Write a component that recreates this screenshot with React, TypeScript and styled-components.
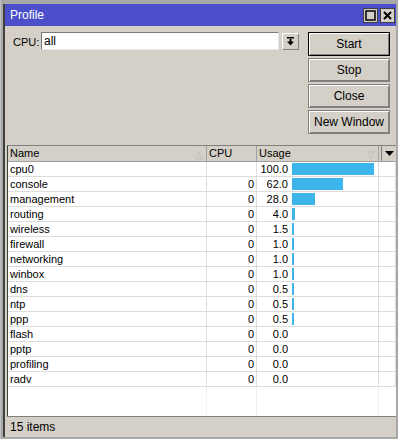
import React from "react";
import styled, { createGlobalStyle } from "styled-components";

const Global = createGlobalStyle`
  html, body { margin: 0; padding: 0; background: #9a9a9a; }
  body { font-family: "Liberation Sans", Arial, sans-serif; font-size: 11px; color: #000; }
  * { box-sizing: border-box; }
`;

const Frame = styled.div`
  width: 398px;
  height: 439px;
  background: #a8a8a8;
  padding: 4px 2px 2px 4px;
  display: flex;
  flex-direction: column;
  border-left: 1px solid #c0c0c0;
  position: relative;
  &::before {
    content: "";
    position: absolute;
    left: 2px;
    top: 4px;
    bottom: 2px;
    width: 2px;
    background: #404040;
  }
`;

const TitleBar = styled.div`
  height: 22px;
  background: #4b4fc9;
  display: flex;
  align-items: center;
  padding: 0 1px 0 5px;
  color: #fff;
  font-size: 12px;
`;

const Title = styled.div`
  flex: 1;
`;

const TitleBtn = styled.div`
  width: 15px;
  height: 15px;
  margin-left: 2px;
  background: #d4d0c8;
  border: 1px solid #404040;
  display: flex;
  align-items: center;
  justify-content: center;
`;

const Body = styled.div`
  flex: 1;
  background: #d4d0c8;
  display: flex;
  flex-direction: column;
`;

const Top = styled.div`
  height: 119px;
  display: flex;
  padding: 6px 6px 0 8px;
`;

const CpuRow = styled.div`
  display: flex;
  align-items: flex-start;
  flex: 1;
`;

const Label = styled.div`
  font-size: 11px;
  padding-top: 4px;
  width: 28px;
  white-space: nowrap;
`;

const Input = styled.div`
  width: 238px;
  height: 18px;
  background: #fff;
  border: 1px solid #7a7a7a;
  border-right-color: #e8e8e8;
  border-bottom-color: #e8e8e8;
  font-size: 12px;
  padding: 1px 2px;
`;

const DropBtn = styled.div`
  width: 17px;
  height: 17px;
  margin-left: 3px;
  margin-top: 1px;
  border: 1px solid #808080;
  border-top-color: #fff;
  border-left-color: #fff;
  background: #d4d0c8;
  display: flex;
  align-items: center;
  justify-content: center;
`;

const Buttons = styled.div`
  display: flex;
  flex-direction: column;
  gap: 2px;
  width: 82px;
`;

const Btn = styled.div<{ $default?: boolean }>`
  height: 24px;
  display: flex;
  align-items: center;
  justify-content: center;
  font-size: 12px;
  background: #d4d0c8;
  border: 1px solid ${(p) => (p.$default ? "#000" : "#808080")};
  box-shadow: inset 1px 1px 0 #fff, inset -1px -1px 0 #808080;
`;

const Table = styled.div`
  margin-left: 2px;
  flex: 1;
  display: flex;
  flex-direction: column;
  border-top: 1px solid #808080;
  border-left: 1px solid #404040;
  background: #fff;
`;

const Cols = "199px 50px 122px 1fr";

const HeaderRow = styled.div`
  display: grid;
  grid-template-columns: ${Cols};
  height: 16px;
  background: #d4d0c8;
  border-bottom: 1px solid #a0a0a0;
`;

const HCell = styled.div<{ $last?: boolean }>`
  position: relative;
  padding-left: 2px;
  line-height: 15px;
  font-size: 11px;
  border-right: 1px solid #a0a0a0;
  ${(p) => (p.$last ? "border-right: none; display:flex; justify-content:flex-end;" : "")}
`;

const Hint = styled.span`
  position: absolute;
  right: 3px;
  top: 1px;
  color: #b8b8b8;
  font-size: 10px;
`;

const MenuBox = styled.div`
  width: 16px;
  height: 15px;
  border-left: 1px solid #808080;
  display: flex;
  align-items: center;
  justify-content: center;
`;

const Row = styled.div`
  display: grid;
  grid-template-columns: ${Cols};
  height: 15px;
  border-bottom: 1px solid #dcdcdc;
`;

const Cell = styled.div<{ $right?: boolean }>`
  border-right: 1px solid #dcdcdc;
  line-height: 14px;
  font-size: 11px;
  padding: 0 2px;
  text-align: ${(p) => (p.$right ? "right" : "left")};
  white-space: nowrap;
  overflow: hidden;
`;

const UsageCell = styled.div`
  border-right: 1px solid #dcdcdc;
  display: flex;
  align-items: center;
  line-height: 14px;
`;

const Val = styled.span`
  width: 31px;
  text-align: right;
  margin-right: 4px;
  font-size: 11px;
`;

const Bar = styled.div`
  height: 12px;
  background: #3db5ea;
`;

const Filler = styled.div`
  flex: 1;
  display: grid;
  grid-template-columns: ${Cols};
`;

const FillCol = styled.div`
  border-right: 1px solid #f0f0f0;
`;

const Status = styled.div`
  height: 20px;
  border-top: 1px solid #808080;
  display: flex;
  align-items: center;
  padding-left: 3px;
  font-size: 12px;
  margin-left: 2px;
  margin-bottom: 1px;
`;

const rows: [string, string, number][] = [
  ["cpu0", "", 100.0],
  ["console", "0", 62.0],
  ["management", "0", 28.0],
  ["routing", "0", 4.0],
  ["wireless", "0", 1.5],
  ["firewall", "0", 1.0],
  ["networking", "0", 1.0],
  ["winbox", "0", 1.0],
  ["dns", "0", 0.5],
  ["ntp", "0", 0.5],
  ["ppp", "0", 0.5],
  ["flash", "0", 0.0],
  ["pptp", "0", 0.0],
  ["profiling", "0", 0.0],
  ["radv", "0", 0.0],
];

export default function App() {
  return (
    <>
      <Global />
      <Frame>
        <TitleBar>
          <Title>Profile</Title>
          <TitleBtn>
            <svg width="11" height="11" viewBox="0 0 11 11">
              <rect x="1" y="1" width="9" height="9" fill="none" stroke="#000" strokeWidth="1.5" />
            </svg>
          </TitleBtn>
          <TitleBtn>
            <svg width="11" height="11" viewBox="0 0 11 11">
              <path d="M2 2 L9 9 M9 2 L2 9" stroke="#000" strokeWidth="2" />
            </svg>
          </TitleBtn>
        </TitleBar>
        <Body>
          <Top>
            <CpuRow>
              <Label>CPU:</Label>
              <Input>all</Input>
              <DropBtn>
                <svg width="9" height="9" viewBox="0 0 9 9">
                  <rect x="1" y="0" width="7" height="1.5" fill="#000" />
                  <rect x="3.5" y="2" width="2" height="3" fill="#000" />
                  <path d="M1 4.5 L8 4.5 L4.5 8.5 Z" fill="#000" />
                </svg>
              </DropBtn>
            </CpuRow>
            <Buttons>
              <Btn $default>Start</Btn>
              <Btn>Stop</Btn>
              <Btn>Close</Btn>
              <Btn>New Window</Btn>
            </Buttons>
          </Top>
          <Table>
            <HeaderRow>
              <HCell>
                Name<Hint>△</Hint>
              </HCell>
              <HCell>CPU</HCell>
              <HCell>
                Usage<Hint>▽</Hint>
              </HCell>
              <HCell $last>
                <MenuBox>
                  <svg width="9" height="5" viewBox="0 0 9 5">
                    <path d="M0 0 L9 0 L4.5 5 Z" fill="#000" />
                  </svg>
                </MenuBox>
              </HCell>
            </HeaderRow>
            {rows.map(([name, cpu, usage]) => (
              <Row key={name}>
                <Cell>{name}</Cell>
                <Cell $right>{cpu}</Cell>
                <UsageCell>
                  <Val>{usage.toFixed(1)}</Val>
                  {usage > 0 && (
                    <Bar style={{ width: Math.max(2, Math.round(usage * 0.82)) }} />
                  )}
                </UsageCell>
                <Cell />
              </Row>
            ))}
            <Filler>
              <FillCol />
              <FillCol />
              <FillCol />
              <div />
            </Filler>
          </Table>
          <Status>15 items</Status>
        </Body>
      </Frame>
    </>
  );
}
